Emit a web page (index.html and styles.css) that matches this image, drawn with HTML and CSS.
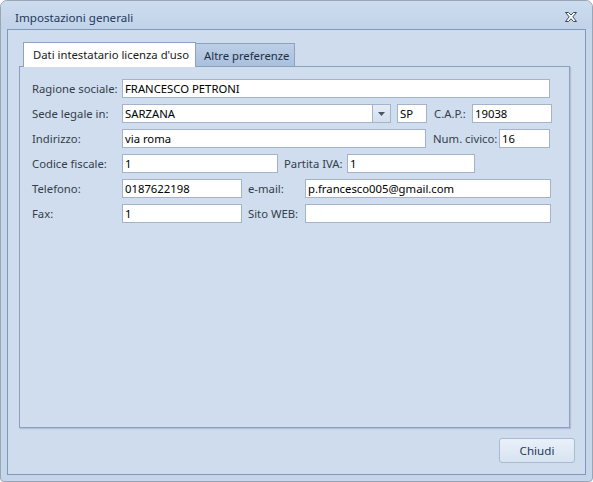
FILE: index.html
```html
<!DOCTYPE html>
<html lang="it">
<head>
<meta charset="utf-8">
<title>Impostazioni generali</title>
<link rel="stylesheet" href="styles.css">
</head>
<body>
<div class="window">
  <div class="titlebar">
    <span class="title">Impostazioni generali</span>
    <svg class="close" width="12" height="10" viewBox="0 0 12 10"><polygon points="0.5,0.5 3.5,0.5 6,3 8.5,0.5 11.5,0.5 7.8,4.8 11.5,9.5 8.5,9.5 6,6.8 3.5,9.5 0.5,9.5 4.2,4.8" fill="#ffffff" stroke="#3a4556" stroke-width="1" stroke-linejoin="round"/></svg>
  </div>
  <div class="frame">
    <div class="tabs">
      <div class="tab active">Dati intestatario licenza d'uso</div>
      <div class="tab">Altre preferenze</div>
    </div>
    <div class="panel">
      <div class="row">
        <span class="lbl">Ragione sociale:</span>
        <span class="inp w428">FRANCESCO PETRONI</span>
      </div>
      <div class="row">
        <span class="lbl">Sede legale in:</span>
        <span class="combo"><span class="combo-text">SARZANA</span><span class="drop"><svg width="7" height="4" viewBox="0 0 7 4"><polygon points="0,0 7,0 3.5,4" fill="#4a5566"/></svg></span></span>
        <span class="inp w30 ml6">SP</span>
        <span class="lbl2 ml7 w38">C.A.P.:</span>
        <span class="inp w80">19038</span>
      </div>
      <div class="row">
        <span class="lbl">Indirizzo:</span>
        <span class="inp w304">via roma</span>
        <span class="lbl2 ml7 w66">Num. civico:</span>
        <span class="inp w51">16</span>
      </div>
      <div class="row">
        <span class="lbl">Codice fiscale:</span>
        <span class="inp w156">1</span>
        <span class="lbl2 ml6 w63">Partita IVA:</span>
        <span class="inp w128">1</span>
      </div>
      <div class="row">
        <span class="lbl">Telefono:</span>
        <span class="inp w120">0187622198</span>
        <span class="lbl2 ml6 w57">e-mail:</span>
        <span class="inp w246">p.francesco005@gmail.com</span>
      </div>
      <div class="row">
        <span class="lbl">Fax:</span>
        <span class="inp w120">1</span>
        <span class="lbl2 ml6 w57">Sito WEB:</span>
        <span class="inp w246"></span>
      </div>
    </div>
    <div class="actions">
      <button class="btn">Chiudi</button>
    </div>
  </div>
</div>
</body>
</html>
```

FILE: styles.css
```css
* { box-sizing: border-box; }
html, body { margin: 0; padding: 0; background: #ffffff; }
body {
  font-family: "Noto Sans", "Open Sans", sans-serif;
  font-size: 11.3px;
  color: #2a2a2a;
}
.window {
  width: 593px;
  height: 482px;
  border: 1px solid #9aa6b6;
  border-radius: 7px 7px 4px 4px;
  background: #c5d6ea;
  display: flex;
  flex-direction: column;
  overflow: hidden;
}
.titlebar {
  height: 28px;
  flex: none;
  display: flex;
  align-items: center;
  justify-content: space-between;
  padding: 4px 15px 0 14px;
  background: linear-gradient(#cddcef, #c1d3e9);
}
.title {
  color: #1e395b;
  font-size: 11.6px;
  white-space: nowrap;
}
.close { display: block; margin-top: -1px; }
.frame {
  flex: 1;
  margin: 0 6px 6px 6px;
  border: 1px solid #7f97b8;
  background: #cfdcee;
  padding: 12px 15px 0 11px;
  display: flex;
  flex-direction: column;
}
.tabs {
  display: flex;
  padding-left: 4px;
  height: 24px;
  align-items: flex-end;
  position: relative;
  z-index: 1;
}
.tab {
  height: 23px;
  border: 1px solid #8ca2c0;
  border-bottom: none;
  border-left: none;
  background: linear-gradient(#bccfe6, #a9c0dd);
  color: #1e2f45;
  display: flex;
  align-items: center;
  white-space: nowrap;
  flex: none;
}
.tab.active {
  height: 25px;
  margin-bottom: -1px;
  border-left: 1px solid #8ca2c0;
  background: #ffffff;
  color: #1a1a1a;
  padding: 0 0 1px 9px;
  width: 173px;
}
.tab:not(.active) { width: 99px; padding: 1px 0 0 8px; }
.panel {
  height: 362px;
  width: 551px;
  border: 1px solid #8aa0be;
  background: #d0ddee;
  box-shadow: 1px 1px 1px rgba(90, 110, 140, 0.25);
  padding: 12px 0 0 12px;
  display: flex;
  flex-direction: column;
  gap: 6px;
}
.row {
  display: flex;
  align-items: center;
  height: 19px;
}
.lbl {
  width: 90px;
  flex: none;
  color: #333d4a;
  white-space: nowrap;
}
.lbl2 {
  flex: none;
  color: #333d4a;
  white-space: nowrap;
}
.inp {
  height: 19px;
  flex: none;
  background: #ffffff;
  border: 1px solid #a2b3ca;
  padding: 0 0 0 2px;
  line-height: 17px;
  color: #000000;
  white-space: nowrap;
  overflow: hidden;
}
.combo {
  width: 269px;
  height: 19px;
  flex: none;
  display: flex;
  background: #ffffff;
  border: 1px solid #a2b3ca;
}
.combo-text {
  flex: 1;
  padding-left: 2px;
  line-height: 17px;
  color: #000000;
}
.drop {
  width: 18px;
  flex: none;
  border-left: 1px solid #a2b3ca;
  background: linear-gradient(#e4ecf6, #d3dfee);
  display: flex;
  align-items: center;
  justify-content: center;
}
.drop svg { display: block; }
.ml6 { margin-left: 6px; }
.ml7 { margin-left: 7px; }
.w428 { width: 428px; }
.w30 { width: 30px; }
.w38 { width: 38px; }
.w80 { width: 80px; }
.w304 { width: 304px; }
.w66 { width: 66px; }
.w51 { width: 51px; }
.w156 { width: 156px; }
.w63 { width: 63px; }
.w128 { width: 128px; }
.w120 { width: 120px; }
.w57 { width: 57px; }
.w246 { width: 246px; }
.actions {
  display: flex;
  justify-content: flex-end;
  padding-top: 10px;
  margin-right: -5px;
}
.btn {
  width: 76px;
  height: 25px;
  border: 1px solid #a9bad1;
  border-radius: 3px;
  background: linear-gradient(#e9f0f9, #d8e4f2);
  font-family: "Noto Sans", "Open Sans", sans-serif;
  font-size: 11.6px;
  color: #1e395b;
  padding: 0;
}
```
